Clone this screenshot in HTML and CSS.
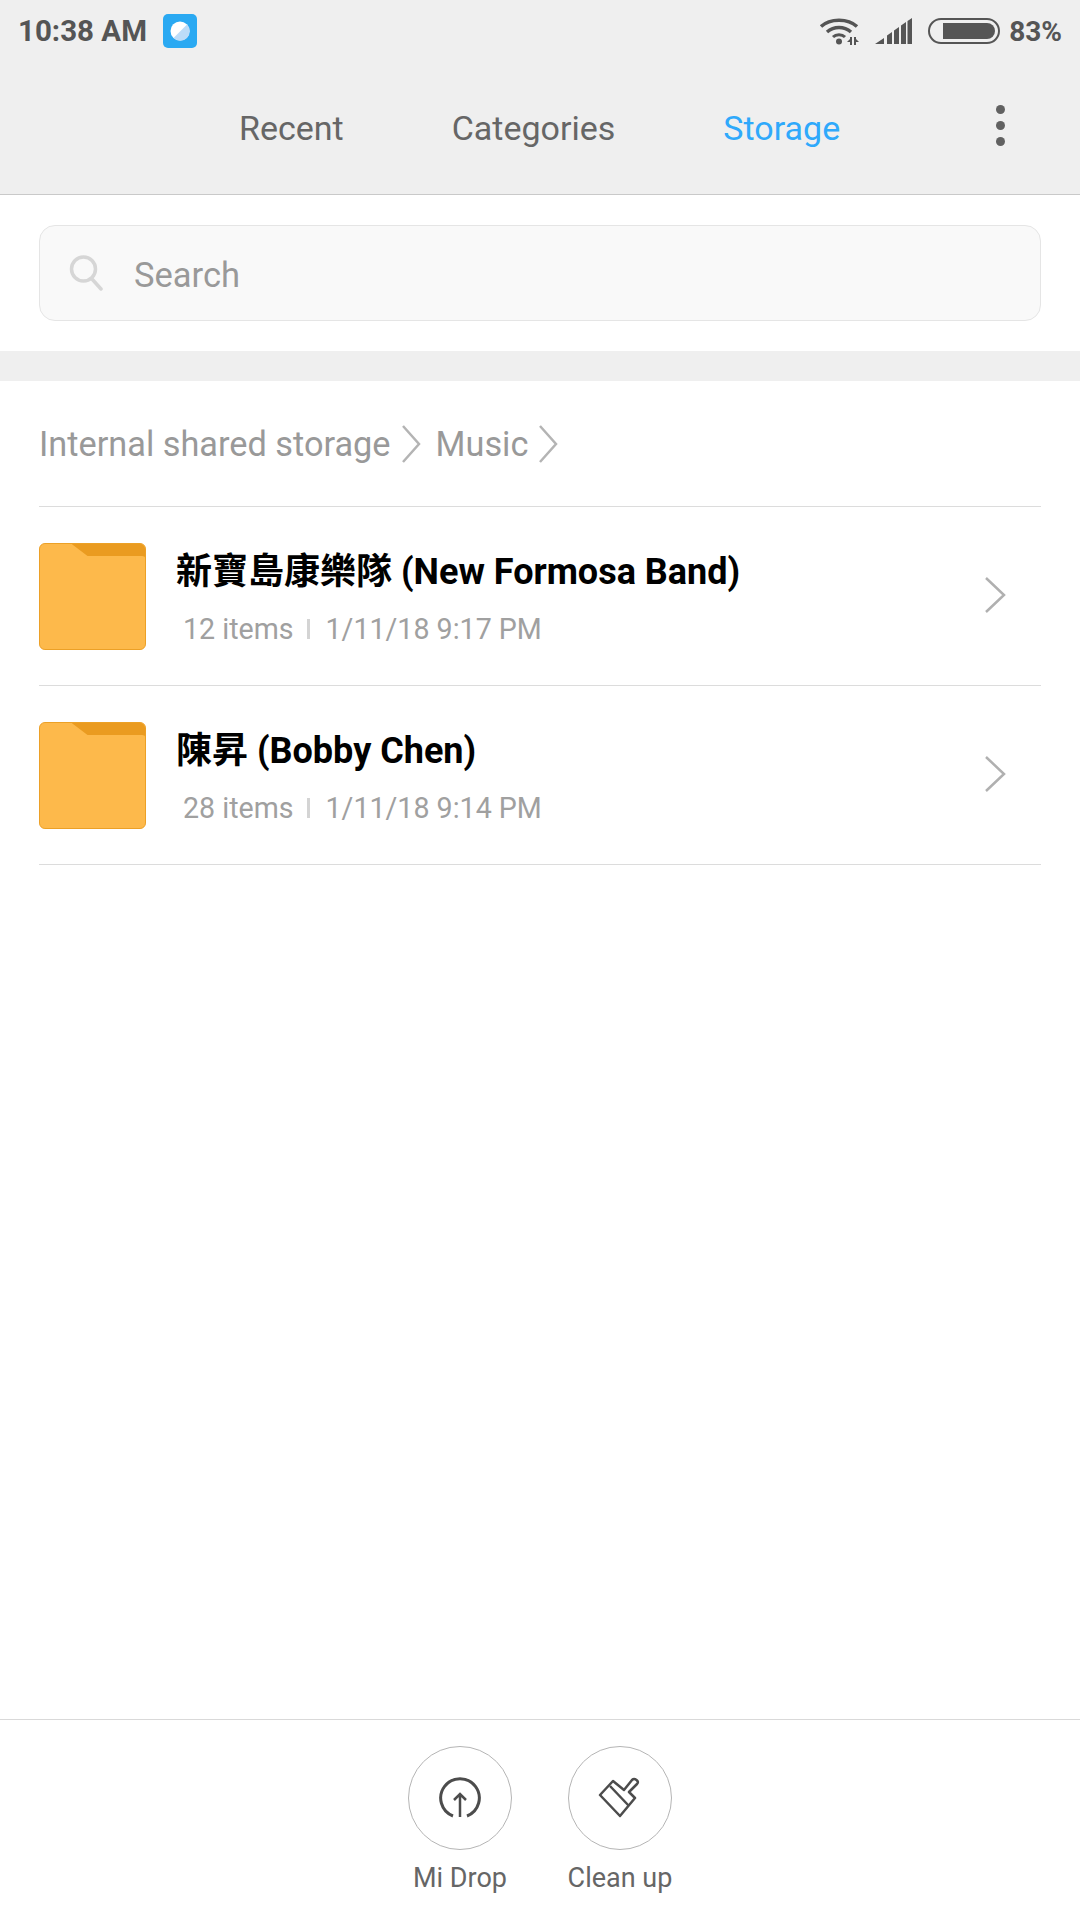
FILE: index.html
```html
<!DOCTYPE html>
<html lang="en">
<head>
    <meta charset="UTF-8">
    <meta name="viewport" content="width=device-width, initial-scale=1.0">
    <title>Storage</title>
    <link rel="stylesheet" href="styles.css">
</head>
<body>
    <div class="page">
        <header class="top">
            <div class="status-bar">
                <span class="time">10:38 AM</span>
                <svg class="notif" width="34" height="34" viewBox="0 0 34 34">
                    <rect width="34" height="34" rx="5" fill="#2aa9f2"/>
                    <circle cx="17" cy="17" r="9.500" fill="#fff"/>
                    <path d="M24 10.500A9.500 9.500 0 0 1 10.500 24Z" fill="#bcdcf8"/>
                </svg>
                <span class="status-right">
                    <svg class="wifi" width="40" height="28" viewBox="0 0 40 28">
                        <path d="M2 9.500C11 1 29 1 38 9.500" fill="none" stroke="#555" stroke-width="3.500"/>
                        <path d="M8 15C15 9 25 9 32 15" fill="none" stroke="#555" stroke-width="3.500"/>
                        <path d="M14 20C17 17 23 17 26 20" fill="none" stroke="#555" stroke-width="3"/>
                        <circle cx="20" cy="24.500" r="3" fill="#555"/>
                        <path d="M32 20v9M36 20v9" stroke="#555" stroke-width="2"/>
                        <path d="M32 21l-4 4h4zM36 21l4 4h-4z" fill="#555"/>
                    </svg>
                    <svg class="signal" width="37" height="26" viewBox="0 0 37 26">
                        <path d="M0 26L9 20V26ZM12 26V17.500L17 14V26ZM19 26V12.500L24 9V26ZM26 26V7.500L31 4V26ZM32.500 26V3L37 0V26Z" fill="#555"/>
                    </svg>
                    <svg class="battery" width="72" height="26" viewBox="0 0 72 26">
                        <rect x="1" y="1" width="70" height="24" rx="12" fill="none" stroke="#555" stroke-width="2"/>
                        <path d="M15 5H59A8 8 0 0 1 59 21H15Z" fill="#555"/>
                    </svg>
                    <span class="percent">83%</span>
                </span>
            </div>
            <nav class="tabs">
                <span class="tab">Recent</span>
                <span class="tab tab-categories">Categories</span>
                <span class="tab tab-storage">Storage</span>
                <span class="more"><i></i><i></i><i></i></span>
            </nav>
        </header>

        <div class="search-wrap">
            <div class="search">
                <svg width="34" height="38" viewBox="0 0 34 38">
                    <circle cx="14.500" cy="15" r="12" fill="none" stroke="#d6d6d6" stroke-width="3.500"/>
                    <path d="M23 25L32 35" stroke="#d6d6d6" stroke-width="3.500" stroke-linecap="round"/>
                </svg>
                <span>Search</span>
            </div>
        </div>

        <div class="band"></div>

        <div class="crumbs">
            <span>Internal shared storage</span>
            <svg class="crumb-arrow" width="20" height="38" viewBox="0 0 20 38"><path d="M2 1L18 19L2 37" fill="none" stroke="#b4b4b4" stroke-width="2.500"/></svg>
            <span>Music</span>
            <svg class="crumb-arrow" width="20" height="38" viewBox="0 0 20 38"><path d="M2 1L18 19L2 37" fill="none" stroke="#b4b4b4" stroke-width="2.500"/></svg>
        </div>

        <div class="list">
            <div class="row">
                <svg class="folder" width="107" height="107" viewBox="0 0 108 108">
                    <path d="M.5 6A5.500 5.500 0 0 1 6 .5H102A5.500 5.500 0 0 1 107.500 6V102A5.500 5.500 0 0 1 102 107.500H6A5.500 5.500 0 0 1 .5 102Z" fill="#fdb94b" stroke="#ec9f24"/>
                    <path d="M33 1H102A5 5 0 0 1 107 6V15Q107 13 104 13H49Z" fill="#ea9b20"/>
                </svg>
                <div class="row-text">
                    <div class="name">新寶島康樂隊 (New Formosa Band)</div>
                    <div class="meta"><span>12 items</span><i class="sep"></i><span>1/11/18 9:17 PM</span></div>
                </div>
                <svg class="row-arrow" width="24" height="44" viewBox="0 0 24 44"><path d="M3 5L21 22L3 39" fill="none" stroke="#b0b0b0" stroke-width="2.500"/></svg>
            </div>
            <div class="row">
                <svg class="folder" width="107" height="107" viewBox="0 0 108 108">
                    <path d="M.5 6A5.500 5.500 0 0 1 6 .5H102A5.500 5.500 0 0 1 107.500 6V102A5.500 5.500 0 0 1 102 107.500H6A5.500 5.500 0 0 1 .5 102Z" fill="#fdb94b" stroke="#ec9f24"/>
                    <path d="M33 1H102A5 5 0 0 1 107 6V15Q107 13 104 13H49Z" fill="#ea9b20"/>
                </svg>
                <div class="row-text">
                    <div class="name">陳昇 (Bobby Chen)</div>
                    <div class="meta"><span>28 items</span><i class="sep"></i><span>1/11/18 9:14 PM</span></div>
                </div>
                <svg class="row-arrow" width="24" height="44" viewBox="0 0 24 44"><path d="M3 5L21 22L3 39" fill="none" stroke="#b0b0b0" stroke-width="2.500"/></svg>
            </div>
        </div>

        <footer class="bottom">
            <div class="action">
                <span class="circle">
                    <svg width="44" height="44" viewBox="0 0 44 44">
                        <path d="M15 40A19.300 19.300 0 1 1 29 40" fill="none" stroke="#4c4c4c" stroke-width="3"/>
                        <path d="M22 41V18M16 24L22 18L28 24" fill="none" stroke="#4c4c4c" stroke-width="2.500"/>
                    </svg>
                </span>
                <span class="action-label">Mi Drop</span>
            </div>
            <div class="action">
                <span class="circle">
                    <svg width="44" height="44" viewBox="0 0 44 44">
                        <path d="M2 19L15 5L26 14L34 4Q36 2 38.500 4Q41 6 39 8L31 16L37 22L22 40Z" fill="none" stroke="#4c4c4c" stroke-width="2.500" stroke-linejoin="round"/>
                        <path d="M12 10L31 30" fill="none" stroke="#4c4c4c" stroke-width="2.500"/>
                    </svg>
                </span>
                <span class="action-label">Clean up</span>
            </div>
        </footer>
    </div>
</body>
</html>
```

FILE: styles.css
```css
* { margin: 0; padding: 0; box-sizing: border-box; font-family: "Roboto", "Noto Sans CJK TC", sans-serif; }
body { background: #fff; }
.page { width: 1080px; height: 1920px; display: flex; flex-direction: column; }

.top { height: 195px; background: #efefef; border-bottom: 1px solid #c9c9c9; }
.status-bar { height: 62px; display: flex; align-items: center; padding: 0 18px; color: #555; }
.time { font-size: 29.500px; font-weight: 700; }
.notif { margin-left: 16px; }
.status-right { margin-left: auto; display: flex; align-items: center; }
.wifi { margin-right: 16px; }
.signal { margin-right: 16px; }
.battery { margin-right: 9px; }
.percent { font-size: 28px; font-weight: 700; }

.tabs { height: 132px; display: flex; align-items: center; padding-left: 239px; }
.tab { font-size: 34px; color: #666; }
.tab-categories { margin-left: 108px; }
.tab-storage { margin-left: 108px; color: #2fa9fb; }
.more { margin-left: auto; margin-right: 75px; margin-bottom: 6px; display: flex; flex-direction: column; gap: 7px; }
.more i { display: block; width: 9px; height: 9px; border-radius: 50%; background: #616161; }

.search-wrap { padding: 30px 39px; }
.search {
    height: 96px;
    background: #f9f9f9;
    border: 1px solid #e5e5e5;
    border-radius: 16px;
    display: flex;
    align-items: center;
    padding-left: 29px;
}
.search span { font-size: 34.500px; color: #999; margin-left: 31px; padding-top: 3px; }

.band { height: 30px; background: #efefef; }

.crumbs { height: 126px; margin: 0 39px; display: flex; align-items: center; border-bottom: 1px solid #dcdcdc; }
.crumbs span { font-size: 34.300px; color: #999; }
.crumb-arrow { margin: 0 15px 0 10px; }

.list { padding: 0 39px; }
.row { height: 179px; padding-top: 1px; display: flex; align-items: center; border-bottom: 1px solid #dcdcdc; }
.row-text { margin-left: 30px; flex: 1; }
.name { font-size: 36px; font-weight: 700; color: #000; margin-bottom: 18px; margin-top: -6px; }
.meta { display: flex; align-items: center; font-size: 28.600px; color: #a0a0a0; padding-left: 7px; }
.sep { width: 3px; height: 20px; background: #d4d4d4; margin: 0 16px 0 13px; }
.row-arrow { margin-right: 34px; margin-bottom: 3px; }

.bottom {
    margin-top: auto;
    height: 201px;
    border-top: 1px solid #d9d9d9;
    display: flex;
    justify-content: center;
    gap: 46px;
    padding-top: 26px;
}
.action { display: flex; flex-direction: column; align-items: center; width: 114px; }
.circle { width: 104px; height: 104px; border: 1px solid #b5b5b5; border-radius: 50%; display: flex; align-items: center; justify-content: center; }
.action-label { font-size: 27px; color: #666; margin-top: 12px; white-space: nowrap; }
```
